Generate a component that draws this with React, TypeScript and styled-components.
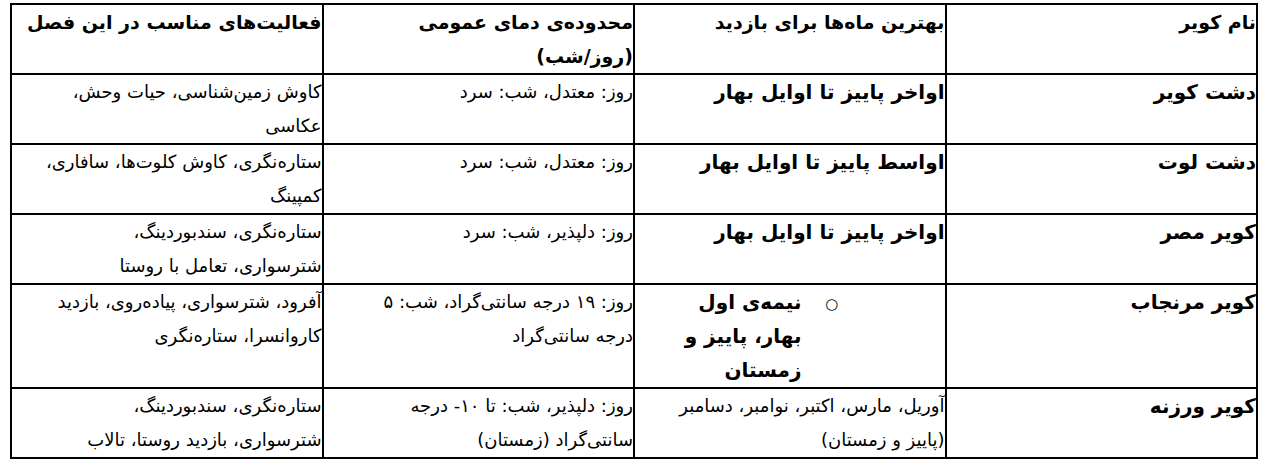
import { Fragment } from 'react';
import styled, { createGlobalStyle } from 'styled-components';

const GlobalStyle = createGlobalStyle`
  html, body {
    margin: 0;
    padding: 0;
    background: #fff;
  }
`;

const Page = styled.div`
  padding: 3px 4px 0 10px;
  direction: rtl;
  font-family: 'DejaVu Sans', sans-serif;
  color: #000;
`;

const Table = styled.table`
  width: 1248px;
  border-collapse: collapse;
  table-layout: fixed;
  border: 2px solid #000;
`;

const Row = styled.tr``;

const Cell = styled.td<{ $bold?: boolean }>`
  width: 25%;
  border: 2px solid #000;
  padding: 0;
  vertical-align: top;
  text-align: right;
  line-height: 34px;
  white-space: nowrap;
  overflow: hidden;
  font-size: ${(p) => (p.$bold ? '20px' : '18px')};
  font-weight: ${(p) => (p.$bold ? 700 : 400)};
`;

const Head = styled(Cell).attrs({ as: 'th' })`
  font-size: 19px;
`;

const Bullets = styled.ul`
  margin: 0;
  padding: 0 143px 0 0;
  list-style: none;

  li {
    display: list-item;
    list-style-type: '○';
  }

  li::marker {
    content: '○\u00a0\u00a0\u00a0\u00a0\u00a0';
    font-size: 15px;
    font-weight: 400;
  }
`;

const Lines = ({ lines }: { lines: string[] }) => (
  <>
    {lines.map((l, i) => (
      <Fragment key={i}>
        {i > 0 && <br />}
        {l}
      </Fragment>
    ))}
  </>
);

type Desert = {
  name: string;
  months: string[];
  monthsList?: boolean;
  monthsBold: boolean;
  temp: string[];
  activities: string[];
};

const rows: Desert[] = [
  {
    name: 'دشت کویر',
    months: ['اواخر پاییز تا اوایل بهار'],
    monthsBold: true,
    temp: ['روز: معتدل، شب: سرد'],
    activities: ['کاوش زمین‌شناسی، حیات وحش،', 'عکاسی'],
  },
  {
    name: 'دشت لوت',
    months: ['اواسط پاییز تا اوایل بهار'],
    monthsBold: true,
    temp: ['روز: معتدل، شب: سرد'],
    activities: ['ستاره‌نگری، کاوش کلوت‌ها، سافاری،', 'کمپینگ'],
  },
  {
    name: 'کویر مصر',
    months: ['اواخر پاییز تا اوایل بهار'],
    monthsBold: true,
    temp: ['روز: دلپذیر، شب: سرد'],
    activities: ['ستاره‌نگری، سندبوردینگ،', 'شترسواری، تعامل با روستا'],
  },
  {
    name: 'کویر مرنجاب',
    months: ['نیمه‌ی اول', 'بهار، پاییز و', 'زمستان'],
    monthsList: true,
    monthsBold: true,
    temp: ['روز: ۱۹ درجه سانتی‌گراد، شب: ۵', 'درجه سانتی‌گراد'],
    activities: ['آفرود، شترسواری، پیاده‌روی، بازدید', 'کاروانسرا، ستاره‌نگری'],
  },
  {
    name: 'کویر ورزنه',
    months: ['آوریل، مارس، اکتبر، نوامبر، دسامبر', '(پاییز و زمستان)'],
    monthsBold: false,
    temp: ['روز: دلپذیر، شب: تا ۱۰- درجه', 'سانتی‌گراد (زمستان)'],
    activities: ['ستاره‌نگری، سندبوردینگ،', 'شترسواری، بازدید روستا، تالاب'],
  },
];

export default function App() {
  return (
    <>
      <GlobalStyle />
      <Page>
        <Table>
          <thead>
            <Row>
              <Head $bold>نام کویر</Head>
              <Head $bold>بهترین ماه‌ها برای بازدید</Head>
              <Head $bold>
                <Lines lines={['محدوده‌ی دمای عمومی', '(روز/شب)']} />
              </Head>
              <Head $bold>فعالیت‌های مناسب در این فصل</Head>
            </Row>
          </thead>
          <tbody>
            {rows.map((r) => (
              <Row key={r.name}>
                <Cell $bold>{r.name}</Cell>
                <Cell $bold={r.monthsBold}>
                  {r.monthsList ? (
                    <Bullets>
                      <li>
                        <Lines lines={r.months} />
                      </li>
                    </Bullets>
                  ) : (
                    <Lines lines={r.months} />
                  )}
                </Cell>
                <Cell>
                  <Lines lines={r.temp} />
                </Cell>
                <Cell>
                  <Lines lines={r.activities} />
                </Cell>
              </Row>
            ))}
          </tbody>
        </Table>
      </Page>
    </>
  );
}
